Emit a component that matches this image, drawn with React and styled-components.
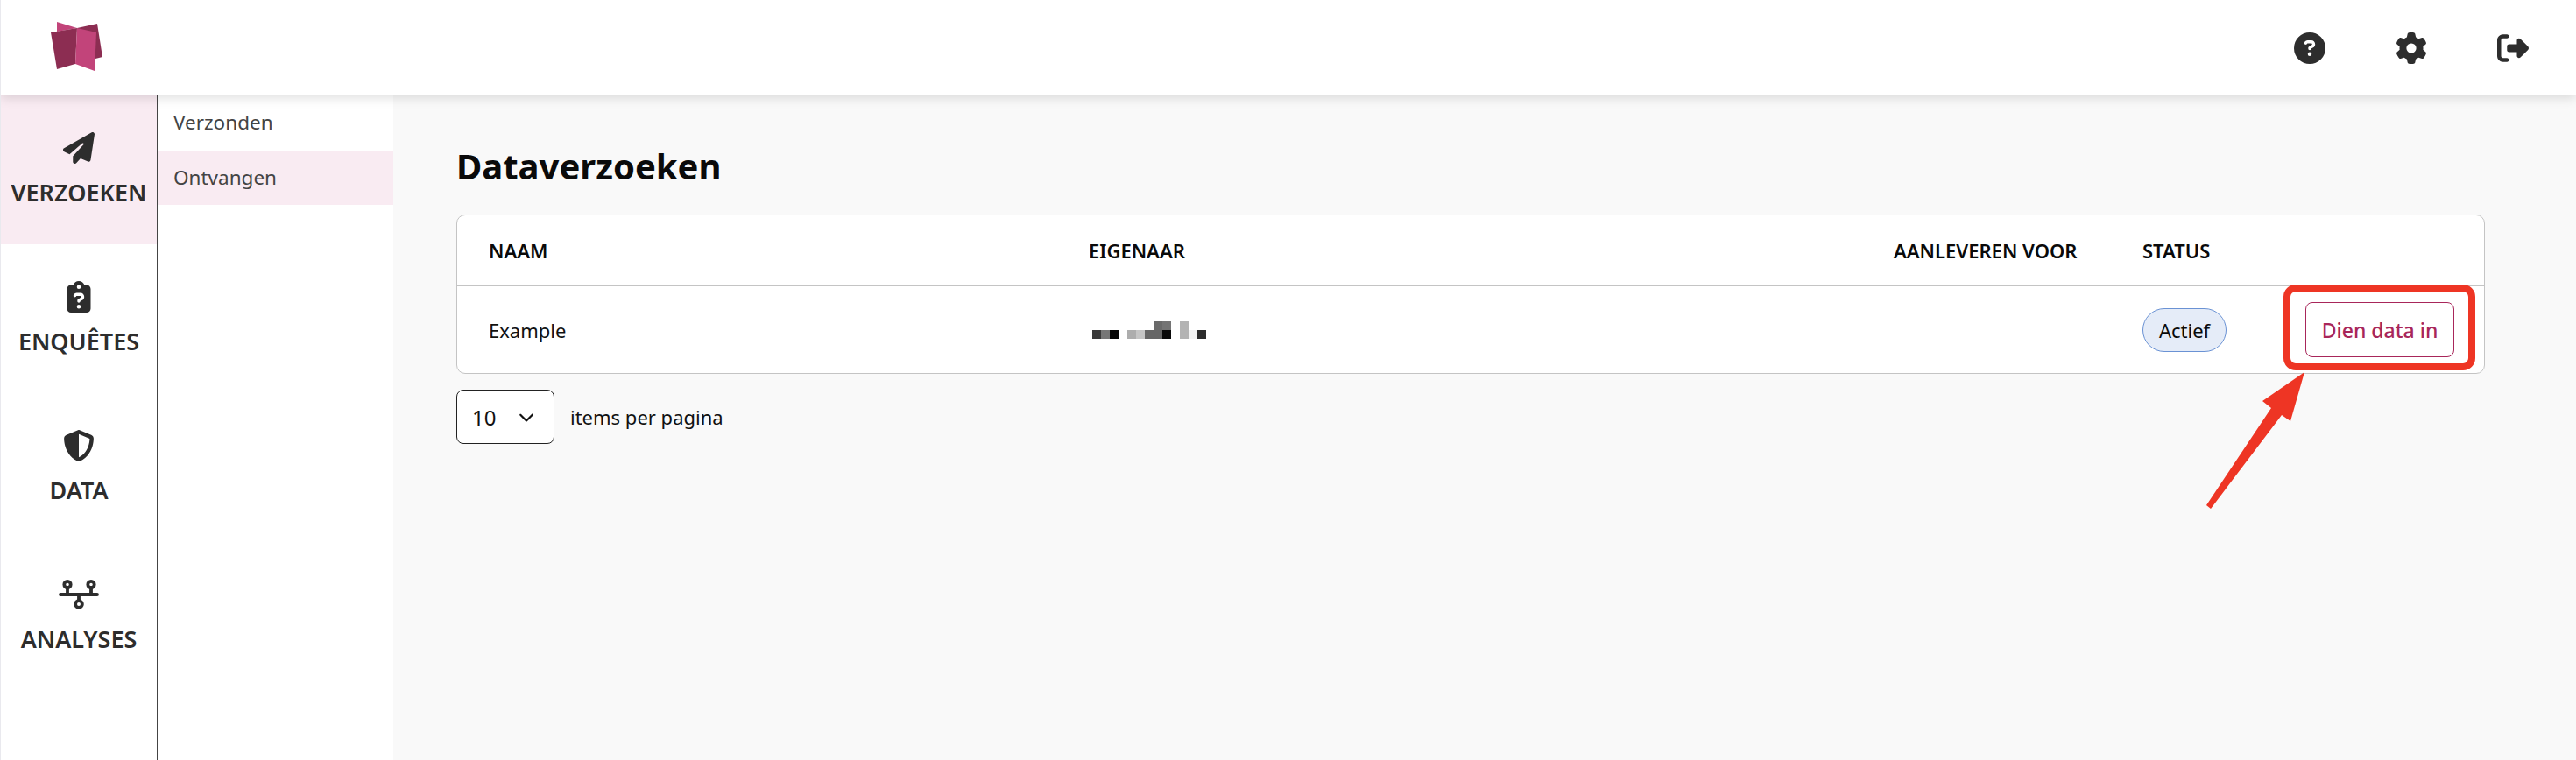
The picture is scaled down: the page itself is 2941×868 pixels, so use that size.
import React from 'react';
import styled, { createGlobalStyle } from 'styled-components';
import {
  FaPaperPlane,
  FaClipboardQuestion,
  FaShieldHalved,
  FaCircleQuestion,
  FaGear,
  FaRightFromBracket,
  FaChevronDown,
} from 'react-icons/fa6';

const GlobalStyle = createGlobalStyle`
  html, body {
    margin: 0;
    padding: 0;
    background: #f9f9f9;
  }
  * { box-sizing: border-box; }
`;

const Page = styled.div`
  position: relative;
  width: 2941px;
  height: 868px;
  overflow: hidden;
  display: flex;
  flex-direction: column;
  border-left: 1px solid #e9e9ee;
  font-family: 'Noto Sans', 'Open Sans', sans-serif;
  color: #2d2d2d;
`;

const Header = styled.header`
  position: relative;
  z-index: 2;
  flex: 0 0 109px;
  display: flex;
  align-items: center;
  justify-content: space-between;
  padding: 0 54px 0 56px;
  background: #fff;
  box-shadow: 0 3px 12px rgba(0, 0, 0, 0.13);
`;

const Logo = styled.svg`
  width: 62px;
  height: 58px;
  display: block;
  margin-top: -1px;
`;

const HeaderIcons = styled.div`
  display: flex;
  align-items: center;
  gap: 80px;
  font-size: 36px;
  color: #2d2d2d;
  svg { display: block; }
`;

const Body = styled.div`
  flex: 1;
  display: flex;
  min-height: 0;
`;

const Sidebar = styled.nav`
  flex: 0 0 179px;
  border-right: 1px solid #444;
  background: #fff;
`;

const NavItem = styled.div`
  height: 170px;
  display: flex;
  flex-direction: column;
  align-items: center;
  padding-top: 42px;
  background: ${(p) => (p.$active ? '#f9ebf2' : '#fff')};
  font-size: 27px;
  line-height: 36px;
  font-weight: 600;
  svg {
    display: block;
    width: 46px;
    height: 36px;
    margin-bottom: 15px;
  }
`;

const SubNav = styled.aside`
  flex: 0 0 269px;
  background: #fff;
`;

const SubItem = styled.div`
  height: 62.5px;
  padding-left: 18px;
  padding-bottom: 1px;
  display: flex;
  align-items: center;
  font-size: 22.5px;
  color: #444;
  background: ${(p) => (p.$active ? '#f9ebf2' : 'transparent')};
`;

const Main = styled.main`
  flex: 1;
  padding: 53px 104px 0 72px;
  background: #f9f9f9;
`;

const Title = styled.h1`
  margin: 0 0 28px;
  font-size: 40px;
  line-height: 55px;
  font-weight: 700;
  color: #0a0a0a;
`;

const Card = styled.div`
  background: #fff;
  border: 1px solid #c4c4c4;
  border-radius: 10px;
  color: #111;
`;

const Row = styled.div`
  display: grid;
  grid-template-columns: 685px 919px 284px 1fr;
  align-items: center;
  padding: 0 34px 0 36px;
  height: ${(p) => p.$height}px;
  font-size: 22px;
  border-bottom: ${(p) => (p.$divider ? '1px solid #c4c4c4' : 'none')};
`;

const HeadCell = styled.div`
  font-size: 22px;
  font-weight: 600;
  color: #0a0a0a;
`;

const Mosaic = styled.svg`
  display: block;
  width: 140px;
  height: 30px;
  margin-left: -1px;
  margin-top: 10px;
`;

const StatusCell = styled.div`
  display: flex;
  align-items: center;
  justify-content: space-between;
`;

const Pill = styled.span`
  display: inline-flex;
  align-items: center;
  justify-content: center;
  width: 96px;
  height: 50px;
  border: 1px solid #6a92d4;
  border-radius: 25px;
  background: #e5ecf8;
  color: #0a0a0a;
`;

const SubmitButton = styled.button`
  width: 170px;
  height: 63px;
  border: 1px solid #a8265a;
  border-radius: 8px;
  background: #fff;
  color: #a8265a;
  font-family: inherit;
  font-size: 23px;
  font-weight: 500;
  padding: 0;
`;

const Pager = styled.div`
  display: flex;
  align-items: center;
  gap: 18px;
  margin-top: 18px;
  font-size: 22px;
  color: #111;
`;

const SelectBox = styled.div`
  width: 112px;
  height: 62px;
  display: flex;
  align-items: center;
  justify-content: space-between;
  padding: 0 22px 0 17px;
  border: 1px solid #222;
  border-radius: 8px;
  background: #fff;
  font-size: 24px;
  svg { font-size: 18px; }
`;

const Highlight = styled.div`
  position: absolute;
  left: 2606px;
  top: 325px;
  width: 219px;
  height: 98px;
  border: 8px solid #ee3524;
  border-radius: 14px;
  z-index: 3;
`;

const Arrow = styled.svg`
  position: absolute;
  left: 2506px;
  top: 420px;
  width: 130px;
  height: 170px;
  z-index: 3;
`;

const navItems = [
  { label: 'VERZOEKEN', icon: <FaPaperPlane />, active: true },
  { label: 'ENQUÊTES', icon: <FaClipboardQuestion /> },
  { label: 'DATA', icon: <FaShieldHalved /> },
  { label: 'ANALYSES', icon: <AnalysesIcon /> },
];

// pixelated owner name: [x, y, grey]
const blocks = [
  [5, 10, '#3a3a3a'], [15, 10, '#777'], [25, 10, '#060606'],
  [45, 10, '#adadad'], [55, 10, '#c5c5c5'], [65, 10, '#666'],
  [75, 0, '#6a6a6a'], [75, 10, '#666'], [85, 0, '#747474'], [85, 10, '#0a0a0a'],
  [105, 0, '#b3b3b3'], [105, 10, '#b3b3b3'], [115, 10, '#f3f3f3'], [125, 10, '#2c2c2c'],
];

function AnalysesIcon() {
  return (
    <svg viewBox="0 0 46 36" fill="none" stroke="#2d2d2d" strokeWidth="3.8" strokeLinecap="round">
      <path d="M2 18h42" />
      <circle cx="10" cy="6.5" r="3.7" />
      <circle cx="37" cy="6.5" r="3.7" />
      <circle cx="23" cy="29" r="3.9" />
      <path d="M10 10v8M37 10v8M23 18v7" />
    </svg>
  );
}

const App = () => (
  <Page>
    <GlobalStyle />
    <Header>
      <Logo viewBox="0 0 62 58">
        <polygon points="8,0 31,7 8,11" fill="#c2447a" />
        <polygon points="31,7 54,2 60,40 52,42" fill="#8c2d52" />
        <polygon points="1,12 31,7 29,48 8,54" fill="#8c2d52" />
        <polygon points="31,7 53,12 51,56 29,48" fill="#c2447a" />
      </Logo>
      <HeaderIcons>
        <FaCircleQuestion />
        <FaGear />
        <FaRightFromBracket />
      </HeaderIcons>
    </Header>
    <Body>
      <Sidebar>
        {navItems.map((item) => (
          <NavItem key={item.label} $active={item.active}>
            {item.icon}
            {item.label}
          </NavItem>
        ))}
      </Sidebar>
      <SubNav>
        <SubItem>Verzonden</SubItem>
        <SubItem $active>Ontvangen</SubItem>
      </SubNav>
      <Main>
        <Title>Dataverzoeken</Title>
        <Card>
          <Row $height={81} $divider>
            <HeadCell>NAAM</HeadCell>
            <HeadCell>EIGENAAR</HeadCell>
            <HeadCell>AANLEVEREN VOOR</HeadCell>
            <HeadCell>STATUS</HeadCell>
          </Row>
          <Row $height={99}>
            <div>Example</div>
            <Mosaic viewBox="0 0 140 30">
              {blocks.map(([x, y, fill]) => (
                <rect key={`${x}-${y}`} x={x} y={y} width="10" height="10" fill={fill} />
              ))}
              <rect x="0" y="22" width="5" height="1" fill="#555" />
            </Mosaic>
            <div />
            <StatusCell>
              <Pill>Actief</Pill>
              <SubmitButton>Dien data in</SubmitButton>
            </StatusCell>
          </Row>
        </Card>
        <Pager>
          <SelectBox>
            10
            <FaChevronDown />
          </SelectBox>
          items per pagina
        </Pager>
      </Main>
    </Body>
    <Highlight />
    <Arrow viewBox="0 0 130 170">
      <polygon points="124,5 108,61 98,54 17,161 12,157 86,46 76,38" fill="#ee3524" />
    </Arrow>
  </Page>
);

export default App;
